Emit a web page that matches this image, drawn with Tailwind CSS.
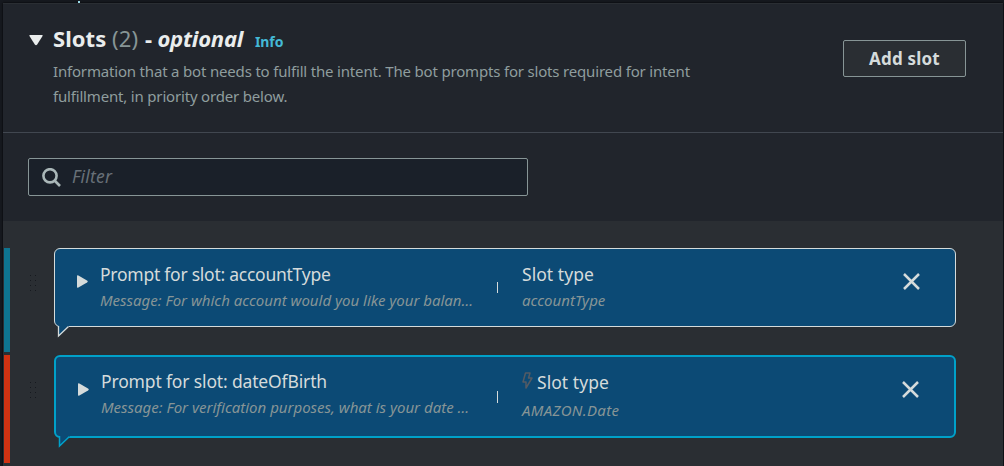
<!DOCTYPE html>
<html lang="en">
<head>
<meta charset="utf-8">
<title>Slots</title>
<script src="https://cdn.jsdelivr.net/npm/@tailwindcss/browser@4"></script>
</head>
<body class="relative h-[466px] w-[1004px] overflow-hidden bg-[#16191f] pl-[3px] pr-px pt-[3px] font-['Noto_Sans','Open_Sans',sans-serif] whitespace-nowrap">
<div class="absolute left-[78px] top-px size-0.5 bg-[#9adbe8]"></div>
<main class="flex h-[463px] w-[1000px] flex-col bg-[#2a2e33] shadow-[0_0_2px_#000]">
  <header class="flex h-[130px] shrink-0 items-start border-t border-b border-t-[#2a2e33] border-b-[#414750] bg-[#21252c] pl-[26px] pr-[37px]">
    <svg class="mt-[31px] h-[11px] w-[14px] shrink-0" viewBox="0 0 13 11" preserveAspectRatio="none" fill="#eaeded"><path d="M1 0h11q1.200 0 .6 1.100L7.600 9.600q-1.100 1.400-2.200 0L.4 1.100Q-.2 0 1 0z"/></svg>
    <div class="ml-2.5 mt-[19px] w-[700px]">
      <div class="flex h-[30px] items-baseline text-[22px] leading-[30px]">
        <h2 class="w-[59px] font-bold text-[#eaeded] tracking-[0.05px]">Slots</h2>
        <span class="w-[33px] text-[#879596] tracking-[0.2px]">(2)</span>
        <span class="w-[110px] font-bold text-[#eaeded] tracking-[-0.2px]">- <i>optional</i></span>
        <a class="text-[14px] font-bold text-[#44b9d6] tracking-[-0.1px]">Info</a>
      </div>
      <p class="mt-[6px] text-[15px] leading-[25px] text-[#8f9d9e] tracking-[-0.18px]">Information that a bot needs to fulfill the intent. The bot prompts for slots required for intent<br>fulfillment, in priority order below.</p>
    </div>
    <button class="ml-auto mt-9 h-[37px] w-[123px] rounded-xs border border-[#879596] bg-[#2a2e33] pb-px text-[17px] leading-[33px] font-bold text-[#d5dbdb] tracking-[0.2px]">Add slot</button>
  </header>
  <section class="h-[88px] shrink-0 bg-[#21252c] pl-[25px] pt-[25px]">
    <div class="flex h-[38px] w-[500px] items-center rounded-xs border border-[#879596] bg-[#1a2029] pl-[13px]">
      <svg class="size-[19px]" viewBox="0 0 19 19" fill="none" stroke="#aab7b8" stroke-width="2.600"><circle cx="8" cy="7.800" r="6.600"/><path d="M12.500 12.500l5.500 5.500"/></svg>
      <span class="mb-0.5 ml-[11px] text-[17.5px] leading-6 text-[#687078] italic tracking-[0.2px]">Filter</span>
    </div>
  </section>
  <section class="flex flex-col gap-[3px] pl-px pt-[27px]">
    <article class="flex h-[104px] items-start">
      <div class="h-full w-1.5 bg-[#0e7490]"></div>
      <svg class="ml-[19px] mt-[27px] h-[18px] w-[9px]" viewBox="0 0 9 18" fill="#16191f"><path d="M1 0h1v1H1zM6 0h1v1H6zM1 5h1v1H1zM6 5h1v1H6zM1 10h1v1H1zM6 10h1v1H6zM1 15h1v1H1zM6 15h1v1H6z"/></svg>
      <div class="relative ml-4 flex h-[79px] w-[902px] rounded-md border border-[#d5dbdb] bg-[#0c4a75] pl-[22px]">
        <svg class="mt-[26px] h-[13px] w-[11px]" viewBox="0 0 11 13" fill="#d5dbdb"><path d="M0 1.200Q0-.3 1.400.5L10 5.600q1.500.9 0 1.800L1.400 12.500Q0 13.300 0 11.800z"/></svg>
        <div class="ml-3 w-[397px] pt-[13px]">
          <h3 class="text-[17.5px] leading-6 text-[#d5dbdb] tracking-[-0.25px]">Prompt for slot: accountType</h3>
          <p class="mt-0.5 text-[15px] leading-6 text-[#879596] italic">Message: For which account would you like your balan…</p>
        </div>
        <div class="mt-[33px] h-[11px] w-px bg-[#d5dbdb]"></div>
        <div class="ml-6 w-[381px] pt-[13px]">
          <h3 class="text-[17.5px] leading-6 text-[#d5dbdb] tracking-[0.05px]">Slot type</h3>
          <p class="mt-0.5 text-[15px] leading-6 text-[#879596] italic">accountType</p>
        </div>
        <svg class="mt-6 size-[17px]" viewBox="0 0 17 17" stroke="#d5dbdb" stroke-width="2.500"><path d="M1 1l15 15M16 1L1 16"/></svg>
        <svg class="absolute left-[2px] top-[76px] h-[13px] w-[14px]" viewBox="0 0 14 13"><path d="M1.500 0V11.500L12 1.500V0z" fill="#0c4a75"/><path d="M1.500 1V11L11.500 1.500" fill="none" stroke="#d5dbdb" stroke-width="1.300"/></svg>
      </div>
    </article>
    <article class="flex h-[108px] items-start">
      <div class="h-full w-1.5 bg-[#d13212]"></div>
      <svg class="ml-[19px] mt-[27px] h-[18px] w-[9px]" viewBox="0 0 9 18" fill="#16191f"><path d="M1 0h1v1H1zM6 0h1v1H6zM1 5h1v1H1zM6 5h1v1H6zM1 10h1v1H1zM6 10h1v1H6zM1 15h1v1H1zM6 15h1v1H6z"/></svg>
      <div class="relative ml-4 flex h-[83px] w-[902px] rounded-md border-2 border-[#00a1c9] bg-[#0c4a75] pl-[22px]">
        <svg class="mt-[26px] h-[13px] w-[11px]" viewBox="0 0 11 13" fill="#d5dbdb"><path d="M0 1.200Q0-.3 1.400.5L10 5.600q1.500.9 0 1.800L1.400 12.500Q0 13.300 0 11.800z"/></svg>
        <div class="ml-3 w-[396px] pt-3">
          <h3 class="text-[17.5px] leading-6 text-[#d5dbdb] tracking-[-0.15px]">Prompt for slot: dateOfBirth</h3>
          <p class="mt-0.5 text-[15px] leading-6 text-[#879596] italic">Message: For verification purposes, what is your date …</p>
        </div>
        <div class="mt-[34px] h-[12px] w-px bg-[#d5dbdb]"></div>
        <div class="ml-6 w-[380px] pt-[13px]">
          <h3 class="flex text-[17.5px] leading-6 text-[#d5dbdb] tracking-[0.05px]"><svg class="mt-0.5 mr-[4px] h-[17px] w-[11px]" viewBox="0 0 11 17" fill="none" stroke="#545b64" stroke-width="1.500" stroke-linejoin="round"><path d="M3.500 1H8L6.500 6H10L4 16V10H1z"/></svg><span>Slot type</span></h3>
          <p class="mt-1 text-[15px] leading-6 text-[#879596] italic tracking-[0.35px]">AMAZON.Date</p>
        </div>
        <svg class="mt-6 size-[17px]" viewBox="0 0 17 17" stroke="#d5dbdb" stroke-width="2.500"><path d="M1 1l15 15M16 1L1 16"/></svg>
        <svg class="absolute left-[2px] top-[77px] h-[14px] w-[14px]" viewBox="0 0 14 14"><path d="M1.500 0V12.500L12 2.500V0z" fill="#0c4a75"/><path d="M1.500 2V12L11.500 2.500" fill="none" stroke="#00a1c9" stroke-width="1.500"/></svg>
      </div>
    </article>
  </section>
</main>
</body>
</html>
